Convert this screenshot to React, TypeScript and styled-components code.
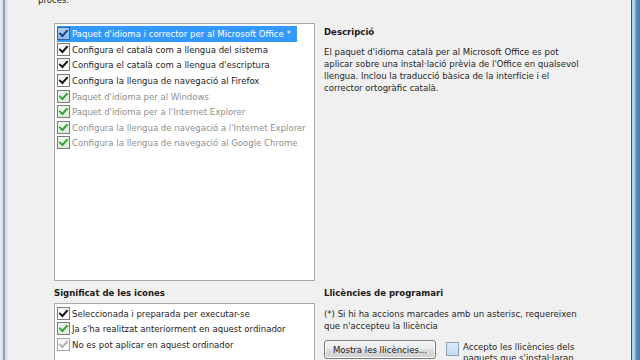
import React from "react";
import styled, { createGlobalStyle } from "styled-components";

const GlobalStyle = createGlobalStyle`
  html, body { margin: 0; padding: 0; background: #f0f0f0; }
  body {
    font-family: "DejaVu Sans", Tahoma, sans-serif;
    font-stretch: condensed;
    font-size: 9.5px;
    color: #1e1e1e;
  }
`;

const Window = styled.div`
  display: flex;
  width: 640px;
  height: 360px;
  overflow: hidden;
  background: #f0f0f0;
`;

const FrameLeft = styled.div`
  width: 8px;
  flex: none;
  background: linear-gradient(
    to right,
    #e4ebf1 0px,
    #d5dfe8 3px,
    #8ea3b7 3px,
    #8ea3b7 5px,
    #cfd8e0 5px,
    #e9ecef 8px
  );
`;

const FrameRight = styled.div`
  width: 10px;
  flex: none;
  background: linear-gradient(
    to right,
    #f7f7f7 0px,
    #f7f7f7 1px,
    #3d4d5e 1px,
    #3d4d5e 2px,
    #b8dcf2 2px,
    #9fcbe9 5px,
    #5b8db5 6px,
    #4a7ca6 10px
  );
`;

const Content = styled.div`
  flex: 1;
  display: flex;
  flex-direction: column;
`;

const Intro = styled.div`
  height: 14px;
  line-height: 14px;
  margin-top: -7px;
  padding-left: 30px;
  color: #222;
`;

const Panes = styled.div`
  display: grid;
  grid-template-columns: 261px 1fr;
  grid-template-rows: 258px auto;
  column-gap: 9px;
  margin: 16px 22px 0 46px;
`;

const ListBox = styled.div<{ $legend?: boolean }>`
  border: 1px solid #a9a9a9;
  background: #ffffff;
  padding: 2px 2px;
  display: flex;
  flex-direction: column;
  align-items: flex-start;
  margin-top: ${(p) => (p.$legend ? 3 : 0)}px;
  height: ${(p) => (p.$legend ? "80px" : "auto")};
`;

const Row = styled.div<{ $selected?: boolean; $h?: number }>`
  display: flex;
  align-items: center;
  gap: 2px;
  height: ${(p) => p.$h ?? 15.6}px;
  padding-right: ${(p) => (p.$selected ? 6 : 3)}px;
  background: ${(p) => (p.$selected ? "#3399ff" : "transparent")};
  color: ${(p) => (p.$selected ? "#ffffff" : "inherit")};
  white-space: nowrap;
`;

type Tone = "black" | "green" | "gray" | "selected";

const Box = styled.span<{ $tone: Tone }>`
  display: inline-flex;
  align-items: center;
  justify-content: center;
  width: 11px;
  height: 11px;
  flex: none;
  border: 1px solid
    ${(p) =>
      p.$tone === "gray" ? "#a6a6a6" : p.$tone === "selected" ? "#2d5f9e" : "#7c7c7c"};
  background: ${(p) =>
    p.$tone === "selected"
      ? "linear-gradient(#a9cdf3, #8fbcec)"
      : p.$tone === "green"
      ? "linear-gradient(#eef6ee, #dcebdc)"
      : "linear-gradient(#f4f4f4, #ffffff)"};
`;

const Label = styled.span<{ $muted?: boolean }>`
  color: ${(p) => (p.$muted ? "#8f8f8f" : "inherit")};
  line-height: 13px;
`;

const checkColor: Record<Tone, string> = {
  black: "#111111",
  green: "#34a534",
  gray: "#b4b4b4",
  selected: "#1b3f7c",
};

const CheckMark = ({ tone }: { tone: Tone }) => (
  <svg width="11" height="11" viewBox="0 0 11 11">
    <path
      d="M2 5.6 L4.4 8 L9 2.8"
      fill="none"
      stroke={checkColor[tone]}
      strokeWidth="2"
      strokeLinecap="square"
      strokeLinejoin="miter"
    />
  </svg>
);

const Check = ({ tone }: { tone: Tone }) => (
  <Box $tone={tone}>
    <CheckMark tone={tone} />
  </Box>
);

const Side = styled.div`
  display: flex;
  flex-direction: column;
`;

const Heading = styled.div<{ $top?: number }>`
  font-weight: bold;
  line-height: 14px;
  margin-top: ${(p) => p.$top ?? 0}px;
  color: #1a1a1a;
  white-space: nowrap;
`;

const Paragraph = styled.p<{ $top?: number }>`
  margin: ${(p) => p.$top ?? 0}px 0 0 0;
  line-height: 11.9px;
  color: #262626;
  white-space: nowrap;
`;

const Actions = styled.div`
  display: flex;
  align-items: flex-start;
  margin-top: 8px;
`;

const Button = styled.button`
  width: 112px;
  height: 19px;
  padding: 0;
  border: 1px solid #7b7b7b;
  border-radius: 3px;
  background: linear-gradient(#f3f3f3 0%, #ebebeb 45%, #dddddd 50%, #cfcfcf 100%);
  font: inherit;
  color: #222;
  box-shadow: inset 0 0 0 1px #fbfbfb;
`;

const AcceptBox = styled.span`
  width: 11px;
  height: 12px;
  margin: 2px 4px 0 10px;
  flex: none;
  border: 1px solid #8aa2ba;
  background: linear-gradient(#dbeaf7, #c3dcf1);
`;

const AcceptText = styled.span`
  line-height: 11px;
  margin-top: 1px;
  color: #262626;
  white-space: nowrap;
`;

const actions: { text: string; tone: Tone; muted?: boolean; selected?: boolean }[] = [
  { text: "Paquet d'idioma i corrector per al Microsoft Office *", tone: "selected", selected: true },
  { text: "Configura el català com a llengua del sistema", tone: "black" },
  { text: "Configura el català com a llengua d'escriptura", tone: "black" },
  { text: "Configura la llengua de navegació al Firefox", tone: "black" },
  { text: "Paquet d'idioma per al Windows", tone: "green", muted: true },
  { text: "Paquet d'idioma per a l'Internet Explorer", tone: "green", muted: true },
  { text: "Configura la llengua de navegació a l'Internet Explorer", tone: "green", muted: true },
  { text: "Configura la llengua de navegació al Google Chrome", tone: "green", muted: true },
];

const legend: { text: string; tone: Tone }[] = [
  { text: "Seleccionada i preparada per executar-se", tone: "black" },
  { text: "Ja s'ha realitzat anteriorment en aquest ordinador", tone: "green" },
  { text: "No es pot aplicar en aquest ordinador", tone: "gray" },
];

export default function App() {
  return (
    <>
      <GlobalStyle />
      <Window>
        <FrameLeft />
        <Content>
          <Intro>procés:</Intro>
          <Panes>
            <ListBox>
              {actions.map((a) => (
                <Row key={a.text} $selected={a.selected}>
                  <Check tone={a.tone} />
                  <Label $muted={a.muted}>{a.text}</Label>
                </Row>
              ))}
            </ListBox>
            <Side>
              <Heading $top={2}>Descripció</Heading>
              <Paragraph $top={7}>
                El paquet d'idioma català per al Microsoft Office es pot
                <br />
                aplicar sobre una instal·lació prèvia de l'Office en qualsevol
                <br />
                llengua. Inclou la traducció bàsica de la interfície i el
                <br />
                corrector ortogràfic català.
              </Paragraph>
            </Side>
            <Side>
              <Heading $top={5}>Significat de les icones</Heading>
              <ListBox $legend>
                {legend.map((l) => (
                  <Row key={l.text} $h={15.3}>
                    <Check tone={l.tone} />
                    <Label>{l.text}</Label>
                  </Row>
                ))}
              </ListBox>
            </Side>
            <Side>
              <Heading $top={5}>Llicències de programari</Heading>
              <Paragraph $top={8}>
                (*) Si hi ha accions marcades amb un asterisc, requereixen
                <br />
                que n'accepteu la llicència
              </Paragraph>
              <Actions>
                <Button>Mostra les llicències...</Button>
                <AcceptBox />
                <AcceptText>
                  Accepto les llicències dels
                  <br />
                  paquets que s'instal·laran
                </AcceptText>
              </Actions>
            </Side>
          </Panes>
        </Content>
        <FrameRight />
      </Window>
    </>
  );
}
